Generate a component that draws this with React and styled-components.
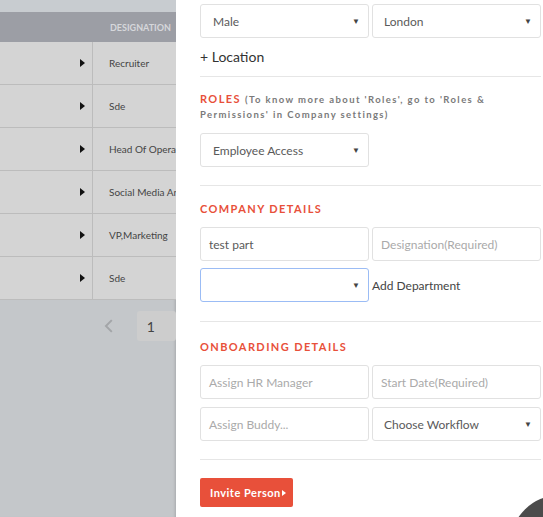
import React from 'react';
import styled, { createGlobalStyle } from 'styled-components';

const GlobalStyle = createGlobalStyle`
  html, body {
    margin: 0;
    padding: 0;
    height: 100%;
    overflow: hidden;
  }
  body {
    font-family: Lato, "Open Sans", Arial, sans-serif;
    background: #fff;
  }
`;

const Page = styled.div`
  display: flex;
  width: 543px;
  height: 517px;
  overflow: hidden;
  position: relative;
`;

const Backdrop = styled.div`
  width: 176px;
  flex-shrink: 0;
  background: #c4c7ca;
  overflow: hidden;
  box-shadow: inset -3px 0 3px -2px rgba(0, 0, 0, 0.15);
`;

const TopStrip = styled.div`
  height: 12px;
  background: #c8ccd0;
`;

const HeaderRow = styled.div`
  display: flex;
  height: 30px;
  background: #9c9ea5;
  align-items: center;
`;

const HeadCell = styled.div`
  width: ${p => p.$w || 'auto'};
  flex-shrink: 0;
  padding-left: ${p => p.$pad || 0}px;
  color: #d6d7db;
  font-size: 9px;
  font-weight: 700;
  white-space: nowrap;
`;

const Row = styled.div`
  display: flex;
  height: 42px;
  background: #d4d4d4;
  border-bottom: 1px solid #bcbcbc;
`;

const ArrowCell = styled.div`
  width: 93px;
  flex-shrink: 0;
  border-right: 1px solid #bcbcbc;
  display: flex;
  align-items: center;
  justify-content: flex-end;
  padding-right: 7px;
  box-sizing: border-box;
`;

const Triangle = styled.span`
  width: 0;
  height: 0;
  border-top: 4px solid transparent;
  border-bottom: 4px solid transparent;
  border-left: 5px solid #111;
`;

const NameCell = styled.div`
  display: flex;
  align-items: center;
  padding-left: 16px;
  font-size: 10px;
  color: #444;
  white-space: nowrap;
`;

const Pager = styled.div`
  display: flex;
  align-items: center;
  gap: 22px;
  padding: 11px 0 0 103px;
`;

const PageBox = styled.div`
  width: 40px;
  height: 30px;
  background: #cdcdcd;
  border-radius: 3px;
  display: flex;
  align-items: center;
  padding-left: 10px;
  box-sizing: border-box;
  color: #444;
  font-size: 14px;
`;

const Panel = styled.div`
  flex: 1;
  padding: 0 2px 0 24px;
  background: #fff;
`;

const Section = styled.div`
  padding: ${p => p.$top}px 0 ${p => p.$bottom}px;
  border-bottom: ${p => (p.$last ? 'none' : '1px solid #e6e6e6')};
`;

const FieldRow = styled.div`
  display: flex;
  gap: 3px;
  margin-top: ${p => p.$mt || 0}px;
  align-items: center;
`;

const Field = styled.div`
  width: 169px;
  height: ${p => p.$h || 34}px;
  box-sizing: border-box;
  border: 1px solid ${p => (p.$focus ? '#9bbcf5' : '#e1e1e1')};
  border-radius: 3px;
  display: flex;
  align-items: center;
  justify-content: space-between;
  padding: 0 8px 0 ${p => p.$pad || 8}px;
  font-size: 12px;
  color: ${p => (p.$muted ? '#aaa' : '#5a5a5a')};
  white-space: nowrap;
  background: #fff;
`;

const Caret = styled.span`
  font-size: 8px;
  color: #444;
`;

const LinkText = styled.div`
  margin-top: 10px;
  font-size: 14px;
  line-height: 18px;
  color: #333;
`;

const SideText = styled.span`
  font-size: 12px;
  color: #444;
`;

const Heading = styled.div`
  font-size: 11px;
  line-height: 14px;
  font-weight: 700;
  letter-spacing: 1.4px;
  color: #e8503a;
  max-width: ${p => p.$max || 'none'};
`;

const Note = styled.span`
  font-size: 9.5px;
  font-weight: 700;
  letter-spacing: 1.4px;
  color: #7a7a7a;
`;

const InviteButton = styled.button`
  margin-top: 18px;
  height: 29px;
  width: 93px;
  border: none;
  border-radius: 2px;
  background: #e8503a;
  color: #fff;
  font-family: Lato, sans-serif;
  font-weight: 700;
  font-size: 11px;
  letter-spacing: 0.5px;
  display: flex;
  align-items: center;
  padding: 0 0 0 10px;
  gap: 1px;
`;

const SmallArrow = styled.span`
  width: 0;
  height: 0;
  border-top: 3.5px solid transparent;
  border-bottom: 3.5px solid transparent;
  border-left: 4px solid #fff;
`;

const ChatBubble = styled.div`
  position: absolute;
  left: 510px;
  top: 495px;
  width: 100px;
  height: 100px;
  border-radius: 50%;
  background: #4b4b4b;
`;

const rows = ['Recruiter', 'Sde', 'Head Of Operations', 'Social Media Analyst', 'VP,Marketing', 'Sde'];

const Select = ({ children, pad, focus }) => (
  <Field $pad={pad} $focus={focus}>
    <span>{children}</span>
    <Caret>▼</Caret>
  </Field>
);

const App = () => (
  <>
    <GlobalStyle />
    <Page>
      <Backdrop>
        <TopStrip />
        <HeaderRow>
          <HeadCell $w="93px" />
          <HeadCell $pad={17}>DESIGNATION</HeadCell>
        </HeaderRow>
        {rows.map((r, i) => (
          <Row key={i}>
            <ArrowCell><Triangle /></ArrowCell>
            <NameCell>{r}</NameCell>
          </Row>
        ))}
        <Pager>
          <svg width="12" height="16" viewBox="0 0 12 16">
            <path d="M9 2 L3 8 L9 14" fill="none" stroke="#a3a5a8" strokeWidth="2" />
          </svg>
          <PageBox>1</PageBox>
        </Pager>
      </Backdrop>

      <Panel>
        <Section $top={4} $bottom={10}>
          <FieldRow>
            <Select pad={12}>Male</Select>
            <Select pad={11}>London</Select>
          </FieldRow>
          <LinkText>+ Location</LinkText>
        </Section>

        <Section $top={15} $bottom={18}>
          <Heading $max="300px">
            ROLES <Note>(To know more about 'Roles', go to 'Roles &amp; Permissions' in Company settings)</Note>
          </Heading>
          <FieldRow $mt={11}>
            <Select pad={12}>Employee Access</Select>
          </FieldRow>
        </Section>

        <Section $top={16} $bottom={19}>
          <Heading>COMPANY DETAILS</Heading>
          <FieldRow $mt={11}>
            <Field>test part</Field>
            <Field $muted>Designation(Required)</Field>
          </FieldRow>
          <FieldRow $mt={7}>
            <Select focus>{''}</Select>
            <SideText>Add Department</SideText>
          </FieldRow>
        </Section>

        <Section $top={18} $bottom={18}>
          <Heading>ONBOARDING DETAILS</Heading>
          <FieldRow $mt={11}>
            <Field $muted>Assign HR Manager</Field>
            <Field $muted>Start Date(Required)</Field>
          </FieldRow>
          <FieldRow $mt={8}>
            <Field $muted>Assign Buddy...</Field>
            <Select pad={11}>Choose Workflow</Select>
          </FieldRow>
        </Section>

        <Section $top={0} $bottom={0} $last>
          <InviteButton>
            Invite Person<SmallArrow />
          </InviteButton>
        </Section>
      </Panel>
      <ChatBubble />
    </Page>
  </>
);

export default App;
